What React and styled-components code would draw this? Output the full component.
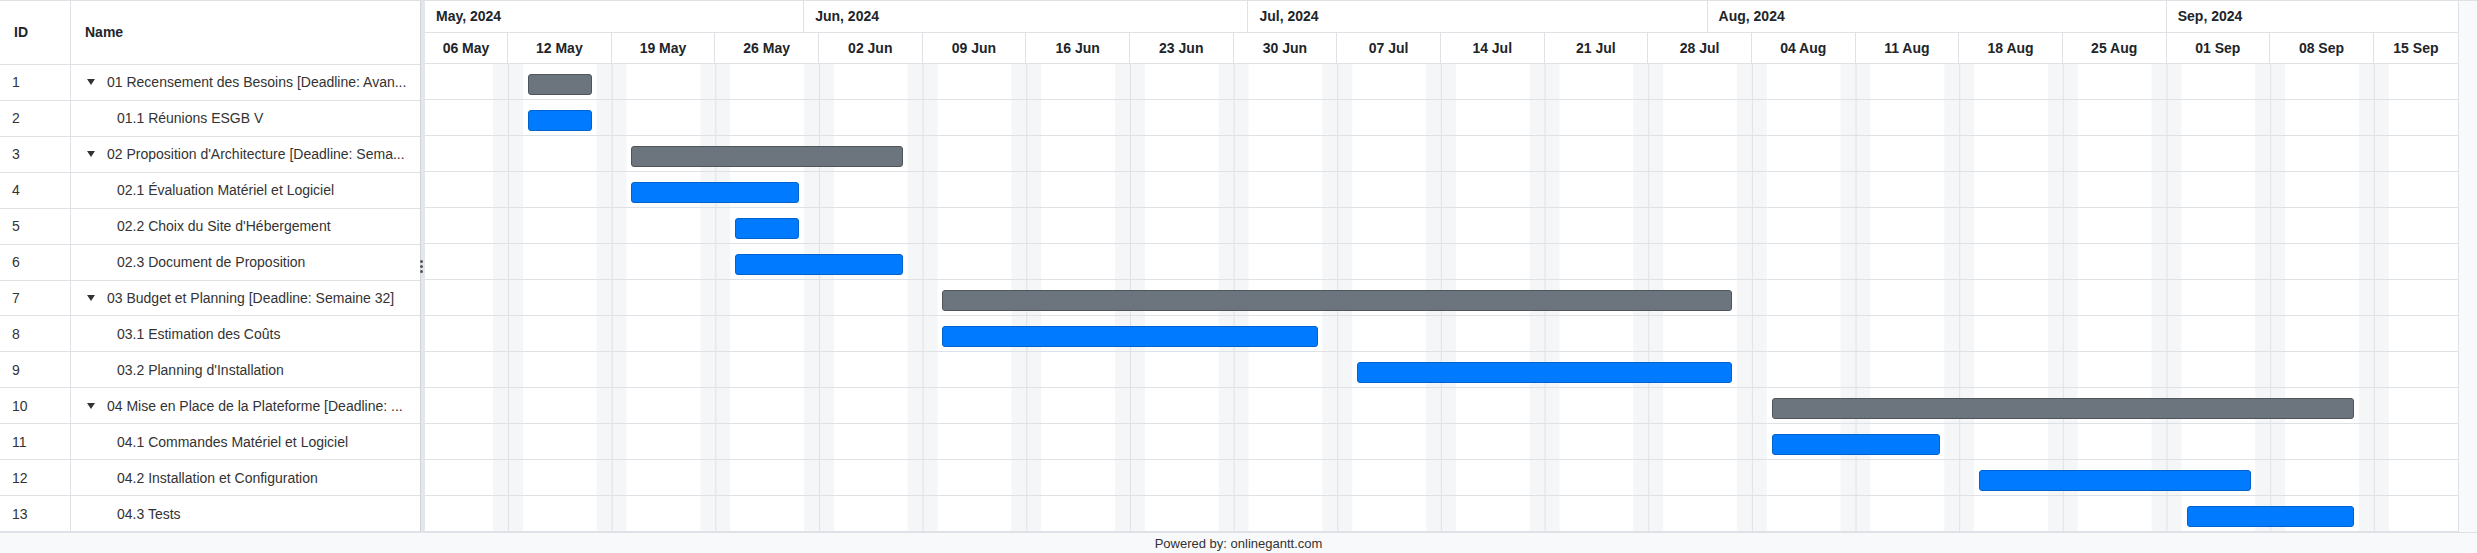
import React from "react";
import styled, { createGlobalStyle } from "styled-components";

const Global = createGlobalStyle`
  html, body { margin: 0; padding: 0; background: #fff; }
  body { font-family: "Liberation Sans", Arial, sans-serif; color: #212529; }
`;

const DW = 103.67 / 7;
const OFF = 83; // px from chart start to Sun 12 May (day 0)
const CHART_W = 2033;
const ROW_H = 36;
const px = (d) => OFF + d * DW;

const tasks = [
  { id: 1, name: "01 Recensement des Besoins [Deadline: Avan...", parent: true, s: 1, e: 6 },
  { id: 2, name: "01.1 Réunions ESGB V", s: 1, e: 6 },
  { id: 3, name: "02 Proposition d'Architecture [Deadline: Sema...", parent: true, s: 8, e: 27 },
  { id: 4, name: "02.1 Évaluation Matériel et Logiciel", s: 8, e: 20 },
  { id: 5, name: "02.2 Choix du Site d'Hébergement", s: 15, e: 20 },
  { id: 6, name: "02.3 Document de Proposition", s: 15, e: 27 },
  { id: 7, name: "03 Budget et Planning [Deadline: Semaine 32]", parent: true, s: 29, e: 83 },
  { id: 8, name: "03.1 Estimation des Coûts", s: 29, e: 55 },
  { id: 9, name: "03.2 Planning d'Installation", s: 57, e: 83 },
  { id: 10, name: "04 Mise en Place de la Plateforme [Deadline: ...", parent: true, s: 85, e: 125 },
  { id: 11, name: "04.1 Commandes Matériel et Logiciel", s: 85, e: 97 },
  { id: 12, name: "04.2 Installation et Configuration", s: 99, e: 118 },
  { id: 13, name: "04.3 Tests", s: 113, e: 125 },
];

const months = [
  { label: "May, 2024", from: -OFF / DW, to: 20 },
  { label: "Jun, 2024", from: 20, to: 50 },
  { label: "Jul, 2024", from: 50, to: 81 },
  { label: "Aug, 2024", from: 81, to: 112 },
  { label: "Sep, 2024", from: 112, to: null },
];

const weekLabels = ["06 May", "12 May", "19 May", "26 May", "02 Jun", "09 Jun", "16 Jun", "23 Jun", "30 Jun", "07 Jul", "14 Jul", "21 Jul", "28 Jul", "04 Aug", "11 Aug", "18 Aug", "25 Aug", "01 Sep", "08 Sep", "15 Sep"];

const Page = styled.div`
  width: 2477px;
  height: 553px;
  display: flex;
  flex-direction: column;
  background: #f8f9fa;
`;
const Main = styled.div`
  display: flex;
  height: 532px;
  background: #fff;
  border-top: 1px solid #dee2e6;
  box-sizing: border-box;
`;
const Left = styled.div`
  width: 420px;
  flex: none;
  display: flex;
  flex-direction: column;
`;
const LeftHead = styled.div`
  height: 63px;
  display: flex;
  border-bottom: 1px solid #dee2e6;
  font-weight: bold;
  font-size: 14px;
`;
const Cell = styled.div`
  width: ${(p) => p.$w}px;
  flex: ${(p) => (p.$w ? "none" : "1")};
  display: flex;
  align-items: center;
  padding-left: ${(p) => p.$pl}px;
  box-sizing: border-box;
  border-right: ${(p) => (p.$br ? "1px solid #dee2e6" : "none")};
  white-space: nowrap;
  overflow: hidden;
`;
const LRow = styled.div`
  height: ${ROW_H}px;
  display: flex;
  border-bottom: 1px solid #dee2e6;
  box-sizing: border-box;
  font-size: 14px;
  color: #333;
`;
const Caret = styled.svg`
  width: 8px;
  height: 6px;
  margin: 0 12px 0 4px;
  flex: none;
`;
const Splitter = styled.div`
  width: 5px;
  flex: none;
  background: #e3e6ea;
  border-left: 1px solid #d0d4d9;
  box-sizing: border-box;
  position: relative;
`;
const Handle = styled.div`
  position: absolute;
  top: 259px;
  left: -1px;
  width: 3px;
  display: flex;
  flex-direction: column;
  gap: 2px;
  & > span { width: 3px; height: 3px; background: #555; border-radius: 50%; }
`;
const Chart = styled.div`
  width: ${CHART_W}px;
  flex: none;
  display: flex;
  flex-direction: column;
  border-right: 1px solid #dee2e6;
`;
const HeadRow = styled.div`
  height: ${(p) => p.$h}px;
  display: flex;
  border-bottom: 1px solid #dee2e6;
  box-sizing: border-box;
  font-weight: bold;
  font-size: 14px;
  color: #212529;
`;
const HeadCell = styled.div`
  flex: none;
  box-sizing: border-box;
  border-right: 1px solid #dee2e6;
  display: flex;
  align-items: center;
  justify-content: ${(p) => (p.$center ? "center" : "flex-start")};
  padding-left: ${(p) => (p.$center ? 0 : 11)}px;
  white-space: nowrap;
  &:last-child { border-right: none; flex: 1; }
`;
const Body = styled.div`
  flex: 1;
  background-image:
    linear-gradient(to right, #dee2e6 0, #dee2e6 1px, transparent 1px),
    linear-gradient(to right, #f5f6f8 0, #f5f6f8 ${DW}px, transparent ${DW}px, transparent ${6 * DW}px, #f5f6f8 ${6 * DW}px);
  background-size: 103.67px 100%;
  background-position: ${OFF}px 0;
`;
const CRow = styled.div`
  height: ${ROW_H}px;
  border-bottom: 1px solid #dee2e6;
  box-sizing: border-box;
  position: relative;
`;
const Bar = styled.div`
  position: absolute;
  top: 10px;
  height: 21px;
  box-sizing: border-box;
  border-radius: 3px;
  background: ${(p) => (p.$parent ? "#6c757d" : "#007bff")};
  border: 1px solid ${(p) => (p.$parent ? "#4e555b" : "#0062cc")};
`;
const Filler = styled.div`
  flex: 1;
  background: #f8f9fa;
`;
const Footer = styled.div`
  height: 21px;
  border-top: 1px solid #dee2e6;
  box-sizing: border-box;
  display: flex;
  align-items: center;
  justify-content: center;
  font-size: 13px;
  color: #333;
  background: #f8f9fa;
`;

export default function App() {
  const weekCells = weekLabels.map((l, i) => {
    const w = i === 0 ? OFF : 103.67;
    return { l, w };
  });
  return (
    <Page>
      <Global />
      <Main>
        <Left>
          <LeftHead>
            <Cell $w={71} $pl={14} $br>ID</Cell>
            <Cell $pl={14}>Name</Cell>
          </LeftHead>
          {tasks.map((t) => (
            <LRow key={t.id}>
              <Cell $w={71} $pl={12} $br>{t.id}</Cell>
              <Cell $pl={t.parent ? 12 : 46}>
                {t.parent && (
                  <Caret viewBox="0 0 8 6"><path d="M0 0H8L4 6Z" fill="#333" /></Caret>
                )}
                {t.name}
              </Cell>
            </LRow>
          ))}
        </Left>
        <Splitter>
          <Handle><span /><span /><span /></Handle>
        </Splitter>
        <Chart>
          <HeadRow $h={32}>
            {months.map((m) => (
              <HeadCell key={m.label} style={m.to !== null ? { width: (m.to - m.from) * DW } : undefined}>
                {m.label}
              </HeadCell>
            ))}
          </HeadRow>
          <HeadRow $h={32}>
            {weekCells.map((c, i) => (
              <HeadCell key={c.l} $center style={i < weekCells.length - 1 ? { width: c.w } : undefined}>
                {c.l}
              </HeadCell>
            ))}
          </HeadRow>
          <Body>
            {tasks.map((t) => (
              <CRow key={t.id}>
                <Bar
                  $parent={t.parent}
                  style={{ left: px(t.s) + 5, width: px(t.e) - px(t.s) - 10 }}
                />
              </CRow>
            ))}
          </Body>
        </Chart>
        <Filler />
      </Main>
      <Footer>Powered by: onlinegantt.com</Footer>
    </Page>
  );
}
